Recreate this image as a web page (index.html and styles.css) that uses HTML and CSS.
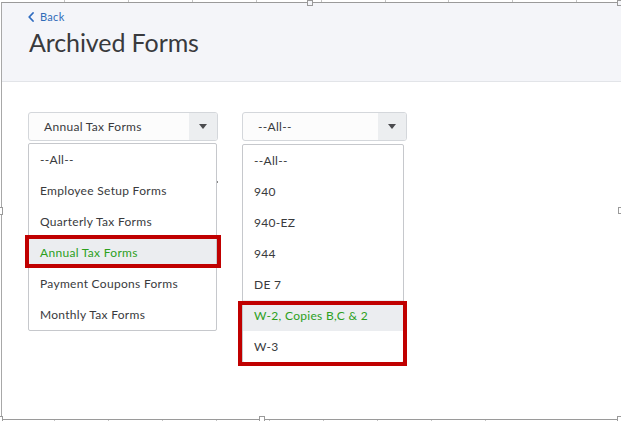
FILE: index.html
```html
<!DOCTYPE html>
<html>
<head>
<meta charset="utf-8">
<link rel="stylesheet" href="styles.css">
</head>
<body>
<div class="frame">
  <div class="page">
    <header class="header">
      <a class="back" href="#">
        <svg class="chev" width="6" height="10" viewBox="0 0 6 10"><path d="M5 1 L1.2 5 L5 9" fill="none" stroke="#2f6cc0" stroke-width="1.8" stroke-linecap="round" stroke-linejoin="round"/></svg>
        <span>Back</span>
      </a>
      <h1 class="title">Archived Forms</h1>
    </header>
    <main class="content">
      <div class="col col-a">
        <div class="select">
          <span class="select-text">Annual Tax Forms</span>
          <span class="select-btn"><span class="tri"></span></span>
        </div>
        <div class="list">
          <div class="item">--All--</div>
          <div class="item">Employee Setup Forms</div>
          <div class="item">Quarterly Tax Forms</div>
          <div class="item active mark-one">Annual Tax Forms</div>
          <div class="item">Payment Coupons Forms</div>
          <div class="item">Monthly Tax Forms</div>
        </div>
        <span class="dot"></span>
      </div>
      <div class="col col-b">
        <div class="select">
          <span class="select-text">--All--</span>
          <span class="select-btn"><span class="tri"></span></span>
        </div>
        <div class="list">
          <div class="item">--All--</div>
          <div class="item">940</div>
          <div class="item">940-EZ</div>
          <div class="item">944</div>
          <div class="item">DE 7</div>
          <div class="group mark-two">
            <div class="item active">W-2, Copies B,C &amp; 2</div>
            <div class="item">W-3</div>
          </div>
        </div>
      </div>
    </main>
  </div>

  <span class="tick t-top" style="left:64px"></span>
  <span class="tick t-top" style="left:128px"></span>
  <span class="tick t-top" style="left:192px"></span>
  <span class="tick t-top" style="left:256px"></span>
  <span class="tick t-top" style="left:321px"></span>
  <span class="tick t-top" style="left:385px"></span>
  <span class="tick t-top" style="left:448px"></span>
  <span class="tick t-top" style="left:512px"></span>
  <span class="tick t-top" style="left:576px"></span>

  <span class="tick t-bot" style="left:54px"></span>
  <span class="tick t-bot" style="left:108px"></span>
  <span class="tick t-bot" style="left:162px"></span>
  <span class="tick t-bot" style="left:216px"></span>
  <span class="tick t-bot" style="left:269px"></span>
  <span class="tick t-bot" style="left:323px"></span>
  <span class="tick t-bot" style="left:377px"></span>
  <span class="tick t-bot" style="left:431px"></span>
  <span class="tick t-bot" style="left:485px"></span>

  <span class="handle h-tm"></span>
  <span class="handle h-tr"></span>
  <span class="handle h-ml"></span>
  <span class="handle h-mr"></span>
  <span class="handle h-bl"></span>
  <span class="handle h-bm"></span>
  <span class="handle h-br"></span>
</div>
</body>
</html>
```

FILE: styles.css
```css
* { box-sizing: border-box; }
html, body { margin: 0; padding: 0; background: #ffffff; }
body { font-family: "Lato", "Open Sans", sans-serif; color: #393a3d; }

.frame {
  position: relative;
  width: 621px;
  height: 421px;
  overflow: hidden;
  background: #ffffff;
}

.page {
  margin: 2px 0 0 1px;
  height: 418px;
  border-top: 1px solid #9a9a9a;
  border-left: 1px solid #a8a8a8;
  border-bottom: 1px solid #9a9a9a;
  display: flex;
  flex-direction: column;
}

.header {
  height: 79px;
  background: #f4f5f9;
  border-bottom: 1px solid #e2e4e8;
  padding: 6px 0 0 26px;
}

.back {
  display: flex;
  align-items: center;
  gap: 6px;
  height: 15px;
  color: #2f6cb8;
  text-decoration: none;
  font-size: 11px;
  letter-spacing: 0.3px;
}
.chev { display: block; }

.title {
  margin: 3px 0 0 1px;
  font-size: 25px;
  line-height: 30px;
  font-weight: 400;
  color: #393a3d;
  letter-spacing: -0.1px;
}

.content {
  display: flex;
  gap: 24px;
  padding: 30px 0 0 26px;
}

.col { position: relative; display: flex; flex-direction: column; gap: 2px; }
.col-a { width: 190px; }
.col-b { width: 165px; }

.select {
  display: flex;
  height: 29px;
  border: 1px solid #d4d7db;
  border-radius: 3px;
  background: #fcfcfc;
  overflow: hidden;
}
.select-text {
  flex: 1;
  display: flex;
  align-items: center;
  padding-left: 15px;
  font-size: 12px;
  letter-spacing: 0.3px;
  color: #393a3d;
}
.select-btn {
  width: 28px;
  background: #eceef0;
  display: flex;
  align-items: center;
  justify-content: center;
}
.tri {
  width: 0;
  height: 0;
  border-left: 4px solid transparent;
  border-right: 4px solid transparent;
  border-top: 5px solid #4a4b4e;
}

.list {
  border: 1px solid #c6c8cc;
  border-radius: 2px;
  background: #ffffff;
}
.col-a .list { width: 189px; }
.col-b .list { width: 162px; margin-top: 1px; }

.item {
  height: 31px;
  display: flex;
  align-items: center;
  padding-left: 11px;
  font-size: 12px;
  letter-spacing: 0.3px;
  color: #393a3d;
  white-space: nowrap;
}
.item.active {
  background: #ebedf0;
  color: #2ca01c;
}

.mark-one, .group { position: relative; }
.mark-one::after {
  content: "";
  position: absolute;
  top: -2px; bottom: 0; left: -4px; right: -5px;
  border: 4px solid #c00000;
}
.mark-two::after {
  content: "";
  position: absolute;
  top: 1px; bottom: -4px; left: -5px; right: -4px;
  border: 4px solid #c00000;
}

.dot {
  position: absolute;
  left: 189px;
  top: 69px;
  width: 1px;
  height: 2px;
  background: #8a8a8a;
}

.tick {
  position: absolute;
  width: 1px;
  height: 2px;
  background: #c4c4c4;
}
.t-top { top: 0; }
.t-bot { top: 420px; }

.handle {
  position: absolute;
  border: 1px solid #9a9a9a;
  background: #ffffff;
}
.h-tm { left: 307px; top: 0; width: 6px; height: 6px; background: #f4f5f9; }
.h-tr { left: 617px; top: 0; width: 6px; height: 6px; background: #f4f5f9; }
.h-ml { left: -2px; top: 207px; width: 5px; height: 8px; }
.h-mr { left: 618px; top: 207px; width: 6px; height: 7px; }
.h-bl { left: -2px; top: 416px; width: 5px; height: 7px; }
.h-bm { left: 259px; top: 416px; width: 6px; height: 7px; }
.h-br { left: 617px; top: 416px; width: 6px; height: 7px; }
```
